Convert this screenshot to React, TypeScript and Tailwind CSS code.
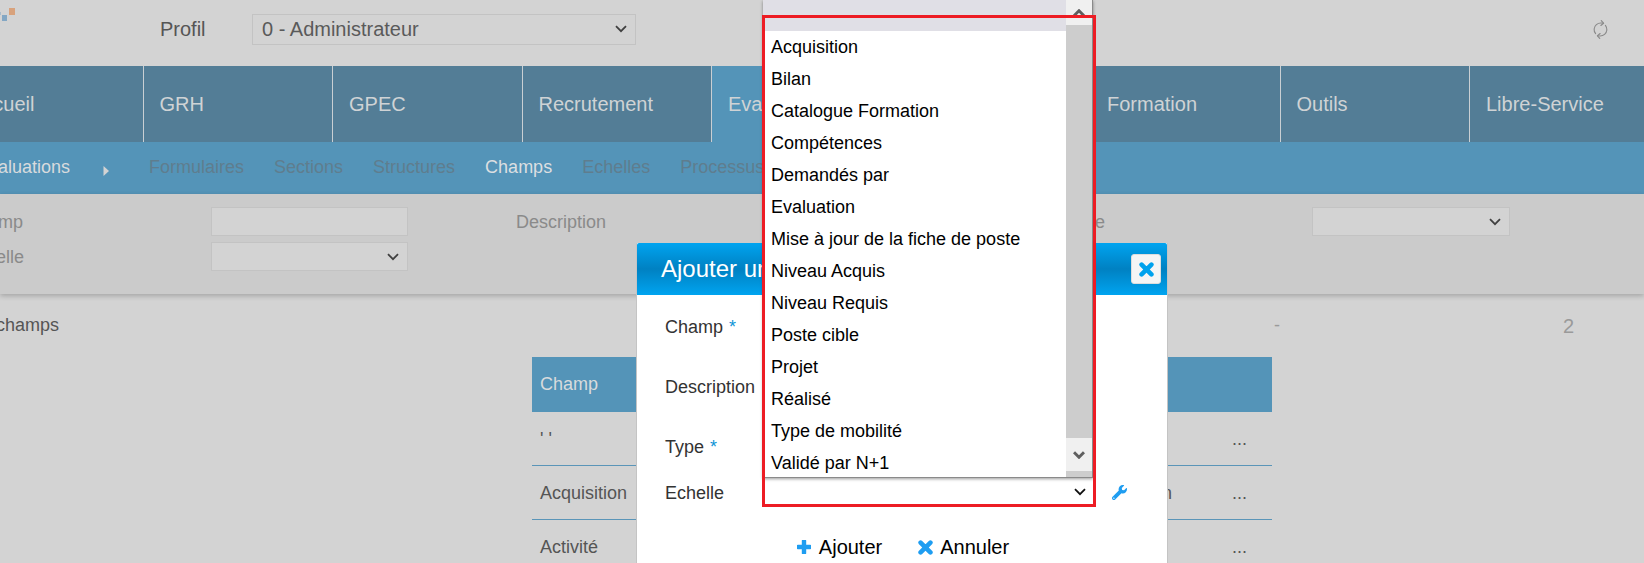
import * as React from "react";
import { FaWrench } from "react-icons/fa";
import { RefreshCw } from "lucide-react";

const navItems = ["Accueil", "GRH", "GPEC", "Recrutement", "Evaluation", "Carrière", "Formation", "Outils", "Libre-Service"];
const subItems = ["Formulaires", "Sections", "Structures", "Champs", "Echelles", "Processus"];
const options = [
  "Acquisition",
  "Bilan",
  "Catalogue Formation",
  "Compétences",
  "Demandés par",
  "Evaluation",
  "Mise à jour de la fiche de poste",
  "Niveau Acquis",
  "Niveau Requis",
  "Poste cible",
  "Projet",
  "Réalisé",
  "Type de mobilité",
  "Validé par N+1",
];

const Chevron: React.FC<{ className?: string; color?: string; weight?: number }> = ({
  className,
  color = "#404040",
  weight = 1.8,
}) => (
  <svg width="12" height="8" viewBox="0 0 12 8" className={className}>
    <path d="M1 1.2 L6 6.2 L11 1.2" fill="none" stroke={color} strokeWidth={weight} />
  </svg>
);

const PlusIcon = () => (
  <svg width="14" height="14" viewBox="0 0 14 14">
    <path d="M7 1 V13 M1 7 H13" fill="none" stroke="#1e9df1" strokeWidth="4.4" strokeLinecap="round" />
  </svg>
);

const CrossIcon: React.FC<{ color?: string }> = ({ color = "#1e9df1" }) => (
  <svg width="15" height="15" viewBox="0 0 15 15">
    <path d="M2.6 2.6 L12.4 12.4 M12.4 2.6 L2.6 12.4" fill="none" stroke={color} strokeWidth="4.6" strokeLinecap="round" />
  </svg>
);

const FakeSelect: React.FC<{ className: string }> = ({ className }) => (
  <div className={"flex items-center justify-end pr-[8px] bg-[#d3d3d3] border border-[#c3c3c3] " + className}>
    <Chevron />
  </div>
);

const Row: React.FC<{ label: string; desc?: string; last?: boolean }> = ({ label, desc, last }) => (
  <div className={"h-[54px] flex items-center pl-[8px] pr-[25px] text-[#555555] " + (last ? "pt-[1px]" : "pt-[2px] border-b border-[#5a95b8]")}>
    <div className="w-[632px] flex justify-between">
      <span>{label}</span>
      <span>{desc}</span>
    </div>
    <div className="flex-1 text-right">...</div>
  </div>
);

const App: React.FC = () => {
  return (
    <div className="relative w-[1644px] h-[563px] overflow-hidden bg-[#d3d3d3] text-[18px] font-['Liberation_Sans',Arial,sans-serif]">
      {/* page behind the dialog */}
      <div className="h-[66px] pb-[8px] flex items-center">
        <svg width="16" height="22" viewBox="0 0 16 22" className="self-start mt-[6px] shrink-0">
          <rect x="9" y="2" width="6" height="7" fill="#d8a27c" />
          <rect x="2" y="9" width="5" height="6" fill="#83a7c4" />
          <rect x="0" y="6" width="1" height="3" fill="#a9bccb" />
        </svg>
        <div className="ml-[144px] w-[92px] text-[20px] text-[#555555]">Profil</div>
        <div className="w-[384px] h-[31px] flex items-center justify-between pl-[9px] pr-[8px] bg-[#d3d3d3] border border-[#c3c3c3] text-[20px] text-[#5a5a5a]">
          0 - Administrateur
          <Chevron />
        </div>
        <RefreshCw size={17} strokeWidth={1.6} className="ml-auto mr-[35px] text-[#8a8a8a] -rotate-[40deg]" />
      </div>

      <div className="h-[76px] flex -ml-[46px] w-[1720px] bg-[#537d96] text-[20px] text-[#cfd3d5]">
        {navItems.map((item, i) => (
          <div
            key={item}
            className={
              "w-[189.5px] shrink-0 pl-[16px] flex items-center border-r border-[#c9cfd3] " +
              (i === 4 ? "bg-[#5494b8]" : "")
            }
          >
            {item}
          </div>
        ))}
      </div>

      <div className="h-[52px] pb-[2px] flex items-center -ml-[23px] bg-[#5494b8] text-[18px] text-[#5f7d8e]">
        <div className="text-[#d8dbdd] w-[126px] font-medium">Evaluations</div>
        <svg width="7" height="10" viewBox="0 0 7 10" className="mt-[8px]">
          <path d="M0.5 0 L6 5 L0.5 10 Z" fill="#d3d3d3" />
        </svg>
        <div className="ml-[39px] flex gap-[30px]">
          {subItems.map((item) => (
            <div key={item} className={item === "Champs" ? "text-[#dcdfe1]" : ""}>
              {item}
            </div>
          ))}
        </div>
      </div>

      <div className="relative h-[100px] pt-[13px] bg-[#cbcbcb] shadow-[0_2px_5px_rgba(0,0,0,0.22)] text-[#8a8a8a]">
        <div className="-ml-[35px] flex items-center h-[29px]">
          <div className="w-[246px] pt-[2px]">Champ</div>
          <div className="w-[197px] h-[29px] bg-[#d3d3d3] border border-[#c3c3c3]"></div>
          <div className="ml-[108px] w-[550px] pt-[2px]">Description</div>
          <div className="w-[246px] pt-[2px]">Type</div>
          <FakeSelect className="w-[198px] h-[29px]" />
        </div>
        <div className="-ml-[35px] mt-[6px] flex items-center h-[29px]">
          <div className="w-[246px] pt-[2px]">Echelle</div>
          <FakeSelect className="w-[197px] h-[29px]" />
        </div>
      </div>

      <div className="h-[63px] flex items-center -ml-[32px] text-[#555555]">
        <div className="w-[1306px]">Nb champs</div>
        <div className="text-[#9a9a9a] w-[289px]">-</div>
        <div className="text-[20px] text-[#9a9a9a]">2</div>
      </div>

      <div className="ml-[532px] w-[740px]">
        <div className="h-[55px] flex items-center pl-[8px] bg-[#5494b8] text-[#d8dbdd]">Champ</div>
        <Row label="' '" />
        <Row label="Acquisition" desc="Acquisition" />
        <Row label="Activité" last />
      </div>

      {/* modal dialog */}
      <div className="absolute left-[636px] top-[243px] w-[532px] h-[400px] bg-white border-x border-[#c4c4c4]">
        <div className="h-[52px] flex items-center justify-between pl-[24px] pr-[6px] rounded-t-[2px] bg-gradient-to-b from-[#00a4f0] via-[#0081c2] to-[#00a4f0] text-white text-[24px]">
          Ajouter un champ
          <div className="w-[30px] h-[30px] flex items-center justify-center rounded-[3px] bg-[#f5f5f5] border border-[#dddddd]">
            <CrossIcon color="#00a2ed" />
          </div>
        </div>
        <div className="h-[2px]"></div>
        <div className="pl-[28px] text-[#333333]">
          <div className="h-[60px] flex items-center">
            Champ <span className="ml-[6px] text-[#0d94d6]">*</span>
          </div>
          <div className="h-[60px] flex items-center">Description</div>
          <div className="h-[60px] flex items-center">
            Type <span className="ml-[6px] text-[#0d94d6]">*</span>
          </div>
          <div className="h-[30px] flex items-center">
            <div className="w-[98px] pt-[2px]">Echelle</div>
            <div className="w-[331px] h-[30px] flex items-center justify-end pr-[8px] border-l border-[#9a9a9a] bg-white">
              <Chevron color="#111111" />
            </div>
            <FaWrench size={15} className="ml-[18px] text-[#1e9df1]" />
          </div>
        </div>
        <div className="mt-[25px] h-[30px] pl-[2px] flex items-center justify-center gap-[36px] text-[20px] text-black">
          <div className="flex items-center gap-[8px]">
            <PlusIcon />
            Ajouter
          </div>
          <div className="flex items-center gap-[7px]">
            <CrossIcon />
            Annuler
          </div>
        </div>
      </div>

      {/* open select list */}
      <div className="absolute left-[763px] top-0 w-[330px] h-[478px] flex overflow-hidden bg-white border-r border-b border-[#8a8a8a] shadow-[0_1px_3px_rgba(0,0,0,0.4)]">
        <div className="flex-1 text-black">
          <div className="h-[31px] bg-[#e0dfe6]"></div>
          {options.map((option) => (
            <div key={option} className="h-[32px] pl-[8px] flex items-center">
              {option}
            </div>
          ))}
        </div>
        <div className="w-[26px] flex flex-col bg-[#cdcdcd]">
          <div className="h-[25px] flex items-center justify-center bg-[#f0f0f0]">
            <Chevron className="rotate-180" color="#5f5f5f" weight={3} />
          </div>
          <div className="mt-auto mb-[6px] h-[33px] flex items-center justify-center bg-[#f0f0f0]">
            <Chevron color="#5f5f5f" weight={3} />
          </div>
        </div>
      </div>

      {/* red annotation */}
      <div className="absolute left-[762px] top-[15px] w-[334px] h-[492px] border-[3px] border-[#ed1c24]"></div>
    </div>
  );
};

export default App;
